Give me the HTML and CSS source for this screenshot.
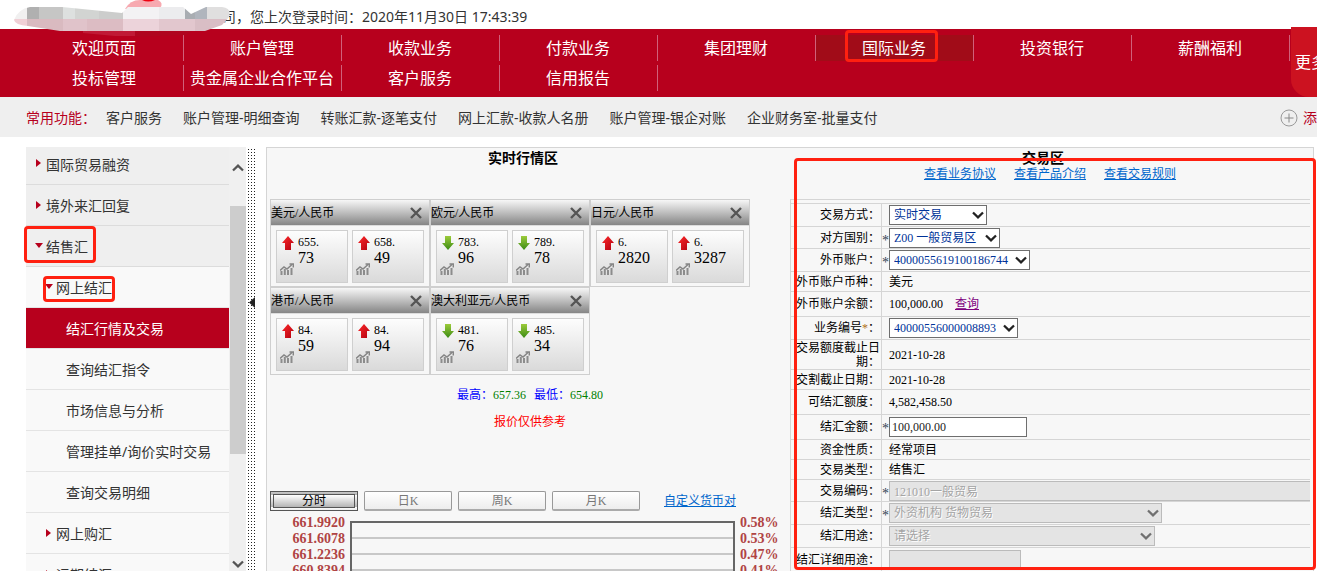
FILE: index.html
```html
<!DOCTYPE html>
<html lang="zh-CN">
<head>
<meta charset="utf-8">
<title>结汇行情及交易</title>
<link rel="stylesheet" href="styles.css">
</head>
<body>
<svg class="defs" width="0" height="0" aria-hidden="true">
  <defs>
    <linearGradient id="gUp" x1="0" y1="0" x2="1" y2="1"><stop offset="0" stop-color="#ff2a2a"/><stop offset="1" stop-color="#b00010"/></linearGradient>
    <linearGradient id="gDown" x1="0" y1="0" x2="0" y2="1"><stop offset="0" stop-color="#9ccb3b"/><stop offset="1" stop-color="#3a8a14"/></linearGradient>
    <symbol id="up" viewBox="0 0 12 14"><path d="M6 0 12 7H9V14H3V7H0Z" fill="url(#gUp)"/></symbol>
    <symbol id="down" viewBox="0 0 12 14"><path d="M3 0H9V7H12L6 14 0 7H3Z" fill="url(#gDown)"/></symbol>
    <symbol id="trend" viewBox="0 0 14 12"><path d="M1.500 12V8M4.800 12V6M8 12V7M11.500 12V5" stroke="#8c8c8c" stroke-width="2" fill="none"/><path d="M0 7.500 4 4 7 6 12 1.500M9.500 1H13.300V4.500" stroke="#858585" stroke-width="1.500" fill="none"/></symbol>
    <symbol id="cross" viewBox="0 0 12 12"><path d="M1 1 11 11M11 1 1 11" stroke="#555" stroke-width="2.400" fill="none"/></symbol>
    <symbol id="chev" viewBox="0 0 12 8"><path d="M1 1.500 6 6.300 11 1.500" stroke="currentColor" stroke-width="2.300" fill="none"/></symbol>
  </defs>
</svg>

<header class="top">
  <svg class="mosaic" width="232" height="38" viewBox="0 0 232 38" aria-hidden="true">
    <defs><clipPath id="blob"><path d="M14 20Q18 9 30 7H62L122 13 128 7H222Q232 8 229 17L222 25 205 31H60L28 26Q15 25 14 20Z"/></clipPath></defs>
    <path d="M125 9Q130 0 140 0H158Q164 3 160 8Z" fill="#f7a9b0"/>
    <path d="M142 0H155Q148 3 142 0Z" fill="#ee0010"/>
    <path d="M83 31H135V36L115 36 83 33Z" fill="#c01a36"/>
    <path d="M135 31H192L186 35 135 37Z" fill="#b0051f"/>
    <g clip-path="url(#blob)">
      <rect x="14" y="7" width="13" height="12" fill="#f1f0f0"/>
      <rect x="27" y="7" width="12" height="12" fill="#b0b0b0"/><rect x="39" y="7" width="24" height="12" fill="#c6c6c5"/>
      <rect x="63" y="7" width="12" height="12" fill="#dde0df"/><rect x="75" y="7" width="24" height="12" fill="#d2d4d2"/>
      <rect x="99" y="7" width="24" height="12" fill="#cccdcc"/><rect x="123" y="7" width="36" height="12" fill="#f3f2f4"/>
      <rect x="159" y="7" width="26" height="12" fill="#ececee"/><rect x="185" y="7" width="10" height="12" fill="#a9adb2"/>
      <rect x="195" y="7" width="12" height="12" fill="#b0b5bd"/><rect x="207" y="7" width="25" height="12" fill="#e0dfdf"/>
      <rect x="14" y="19" width="13" height="12" fill="#f0d0d6"/><rect x="27" y="19" width="36" height="12" fill="#d9bac0"/>
      <rect x="63" y="19" width="24" height="12" fill="#e0c3ca"/><rect x="87" y="19" width="36" height="12" fill="#dcbcc3"/>
      <rect x="123" y="19" width="36" height="12" fill="#ecd3da"/><rect x="159" y="19" width="36" height="12" fill="#e2c7ce"/>
      <rect x="195" y="19" width="37" height="12" fill="#d9bec5"/>
    </g>
    <path d="M183 7H206L191 14Z" fill="#fff"/>
  </svg>
  <p class="login">司，您上次登录时间：2020年11月30日 17:43:39</p>
</header>

<nav class="nav">
  <div class="nav-grid">
    <a href="#">欢迎页面</a><a href="#">账户管理</a><a href="#">收款业务</a><a href="#">付款业务</a><a href="#">集团理财</a><a href="#" class="on">国际业务<i class="mark mark-nav"></i></a><a href="#">投资银行</a><a href="#">薪酬福利</a>
    <a href="#">投标管理</a><a href="#">贵金属企业合作平台</a><a href="#">客户服务</a><a href="#">信用报告</a>
  </div>
  <button class="more" type="button">更多</button>
</nav>

<div class="quick">
  <span class="quick-title">常用功能：</span>
  <a href="#">客户服务</a><a href="#">账户管理-明细查询</a><a href="#">转账汇款-逐笔支付</a><a href="#">网上汇款-收款人名册</a><a href="#">账户管理-银企对账</a><a href="#">企业财务室-批量支付</a>
  <button class="add" type="button"><svg width="18" height="18" viewBox="0 0 18 18"><circle cx="9" cy="9" r="8" fill="none" stroke="#999"/><path d="M9 4.500V13.500M4.500 9H13.500" stroke="#888"/></svg>添加</button>
</div>

<main class="main">
  <aside class="side">
    <ul class="menu">
      <li class="l1 first"><a href="#">国际贸易融资</a></li>
      <li class="l1"><a href="#">境外来汇回复</a></li>
      <li class="l1 open"><a href="#">结售汇</a><i class="mark mark-fx"></i></li>
      <li class="l2 open"><a href="#">网上结汇</a><i class="mark mark-online"></i></li>
      <li class="l3 on"><a href="#">结汇行情及交易</a></li>
      <li class="l3"><a href="#">查询结汇指令</a></li>
      <li class="l3"><a href="#">市场信息与分析</a></li>
      <li class="l3"><a href="#">管理挂单/询价实时交易</a></li>
      <li class="l3"><a href="#">查询交易明细</a></li>
      <li class="l2"><a href="#">网上购汇</a></li>
      <li class="l2"><a href="#">远期结汇</a></li>
    </ul>
    <div class="scroll">
      <svg class="flip" width="12" height="8"><use href="#chev"/></svg>
      <div class="thumb"></div>
      <svg width="12" height="8"><use href="#chev"/></svg>
    </div>
    <div class="split"><svg width="6" height="11" viewBox="0 0 6 11"><path d="M6 0V11L0 5.500Z" fill="#222"/></svg></div>
  </aside>

  <section class="panel">
    <div class="titles"><h2>实时行情区</h2><h2>交易区</h2></div>
    <div class="cols">
      <div class="market">
        <div class="cards">
          <article class="card"><header>美元/人民币<button type="button" aria-label="关闭"><svg width="12" height="12"><use href="#cross"/></svg></button></header>
            <div class="tiles"><div class="tile"><svg class="dir" width="12" height="14"><use href="#up"/></svg><span>655.</span><svg class="trend" width="14" height="12"><use href="#trend"/></svg><b>73</b></div><div class="tile"><svg class="dir" width="12" height="14"><use href="#up"/></svg><span>658.</span><svg class="trend" width="14" height="12"><use href="#trend"/></svg><b>49</b></div></div></article>
          <article class="card"><header>欧元/人民币<button type="button" aria-label="关闭"><svg width="12" height="12"><use href="#cross"/></svg></button></header>
            <div class="tiles"><div class="tile"><svg class="dir" width="12" height="14"><use href="#down"/></svg><span>783.</span><svg class="trend" width="14" height="12"><use href="#trend"/></svg><b>96</b></div><div class="tile"><svg class="dir" width="12" height="14"><use href="#down"/></svg><span>789.</span><svg class="trend" width="14" height="12"><use href="#trend"/></svg><b>78</b></div></div></article>
          <article class="card"><header>日元/人民币<button type="button" aria-label="关闭"><svg width="12" height="12"><use href="#cross"/></svg></button></header>
            <div class="tiles"><div class="tile"><svg class="dir" width="12" height="14"><use href="#up"/></svg><span>6.</span><svg class="trend" width="14" height="12"><use href="#trend"/></svg><b>2820</b></div><div class="tile"><svg class="dir" width="12" height="14"><use href="#up"/></svg><span>6.</span><svg class="trend" width="14" height="12"><use href="#trend"/></svg><b>3287</b></div></div></article>
          <article class="card"><header>港币/人民币<button type="button" aria-label="关闭"><svg width="12" height="12"><use href="#cross"/></svg></button></header>
            <div class="tiles"><div class="tile"><svg class="dir" width="12" height="14"><use href="#up"/></svg><span>84.</span><svg class="trend" width="14" height="12"><use href="#trend"/></svg><b>59</b></div><div class="tile"><svg class="dir" width="12" height="14"><use href="#up"/></svg><span>84.</span><svg class="trend" width="14" height="12"><use href="#trend"/></svg><b>94</b></div></div></article>
          <article class="card"><header>澳大利亚元/人民币<button type="button" aria-label="关闭"><svg width="12" height="12"><use href="#cross"/></svg></button></header>
            <div class="tiles"><div class="tile"><svg class="dir" width="12" height="14"><use href="#down"/></svg><span>481.</span><svg class="trend" width="14" height="12"><use href="#trend"/></svg><b>76</b></div><div class="tile"><svg class="dir" width="12" height="14"><use href="#down"/></svg><span>485.</span><svg class="trend" width="14" height="12"><use href="#trend"/></svg><b>34</b></div></div></article>
        </div>
        <p class="range"><span>最高：<em>657.36</em></span><span>最低：<em>654.80</em></span></p>
        <p class="notice">报价仅供参考</p>
        <div class="tabs">
          <button type="button" class="tab on">分时</button><button type="button" class="tab">日K</button><button type="button" class="tab">周K</button><button type="button" class="tab">月K</button>
          <a href="#">自定义货币对</a>
        </div>
        <div class="chart">
          <div class="axis left"><span>661.9920</span><span>661.6078</span><span>661.2236</span><span>660.8394</span></div>
          <div class="plot"></div>
          <div class="axis"><span>0.58%</span><span>0.53%</span><span>0.47%</span><span>0.41%</span></div>
        </div>
      </div>

      <div class="trade">
        <div class="links"><a href="#">查看业务协议</a><a href="#">查看产品介绍</a><a href="#">查看交易规则</a></div>
        <form class="form">
          <div class="row h23"><label for="f1">交易方式：</label><div class="val"><span class="sel w98"><select id="f1"><option>实时交易</option></select><svg width="12" height="8"><use href="#chev"/></svg></span></div></div>
          <div class="row h22"><label for="f2">对方国别：</label><div class="val"><i class="req">*</i><span class="sel w111"><select id="f2"><option>Z00 一般贸易区</option></select><svg width="12" height="8"><use href="#chev"/></svg></span></div></div>
          <div class="row h23"><label for="f3">外币账户：</label><div class="val"><i class="req">*</i><span class="sel w141"><select id="f3"><option>4000055619100186744</option></select><svg width="12" height="8"><use href="#chev"/></svg></span></div></div>
          <div class="row h20"><span class="lab">外币账户币种：</span><div class="val">美元</div></div>
          <div class="row h25"><span class="lab">外币账户余额：</span><div class="val">100,000.00<a class="query" href="#">查询</a></div></div>
          <div class="row h23"><label for="f4">业务编号<i class="star">*</i>：</label><div class="val"><span class="sel w129"><select id="f4"><option>40000556000008893</option></select><svg width="12" height="8"><use href="#chev"/></svg></span></div></div>
          <div class="row h30"><span class="lab">交易额度截止日期：</span><div class="val">2021-10-28</div></div>
          <div class="row h20"><span class="lab">交割截止日期：</span><div class="val">2021-10-28</div></div>
          <div class="row h25"><span class="lab">可结汇额度：</span><div class="val">4,582,458.50</div></div>
          <div class="row h25"><label for="f5">结汇金额：</label><div class="val"><i class="req">*</i><input id="f5" class="txt w138" type="text" value="100,000.00"></div></div>
          <div class="row h20"><span class="lab">资金性质：</span><div class="val">经常项目</div></div>
          <div class="row h20"><span class="lab">交易类型：</span><div class="val">结售汇</div></div>
          <div class="row h22"><label for="f6">交易编码：</label><div class="val"><i class="req">*</i><input id="f6" class="txt wide" type="text" value="121010一般贸易" disabled></div></div>
          <div class="row h23"><label for="f7">结汇类型：</label><div class="val"><i class="req">*</i><span class="sel w273"><select id="f7" disabled><option>外资机构 货物贸易</option></select><svg width="12" height="8"><use href="#chev"/></svg></span></div></div>
          <div class="row h23"><label for="f8">结汇用途：</label><div class="val"><span class="sel w266"><select id="f8" disabled><option>请选择</option></select><svg width="12" height="8"><use href="#chev"/></svg></span></div></div>
          <div class="row h25"><label for="f9">结汇详细用途：</label><div class="val"><input id="f9" class="txt w132" type="text" disabled></div></div>
        </form>
        <i class="mark mark-trade"></i>
      </div>
    </div>
  </section>
</main>
</body>
</html>
```
FILE: styles.css
```css
* { box-sizing: border-box; }

body {
  margin: 0;
  height: 100vh;
  overflow: hidden;
  display: flex;
  flex-direction: column;
  background: #fff;
  color: #333;
  font: 14px/20px "Noto Sans", "Noto Sans CJK SC", sans-serif;
}

p, h2, ul { margin: 0; padding: 0; }
ul { list-style: none; }
a { color: inherit; text-decoration: none; }
button { padding: 0; border: 0; background: none; font: inherit; color: inherit; }
svg { display: block; flex: none; }
.defs { position: absolute; }

.mark {
  position: absolute;
  border: 3px solid #ff2010;
  border-radius: 4px;
  pointer-events: none;
}

/* top line */
.top { position: relative; flex: none; height: 29px; padding: 7px 0 0 222px; }
.mosaic { position: absolute; left: 0; top: 0; z-index: 2; }
.login { white-space: nowrap; }

/* main navigation */
.nav { flex: none; display: flex; height: 68px; padding-left: 26px; background: #b7001d; color: #fff; font-size: 16px; }
.nav-grid { flex: none; display: grid; grid-template-columns: repeat(8, 158px); grid-auto-rows: 26px; row-gap: 4px; padding-top: 6px; }
.nav-grid a { position: relative; padding-right: 1px; border-right: 1px solid #d0607a; text-align: center; line-height: 26px; white-space: nowrap; }
.nav-grid .on { background: #a10c18; }
.mark-nav { left: 29px; top: -5px; width: 93px; height: 32px; }
.more { flex: none; width: 90px; height: 70px; margin: -2px 0 0 1px; padding-left: 4px; background: #cc1220; border-radius: 0 0 0 18px; color: #fff; text-align: left; }

/* shortcuts */
.quick { flex: none; display: flex; align-items: center; gap: 21px; height: 40px; padding: 2px 0 0 26px; background: #efefef; white-space: nowrap; }
.quick-title { margin-right: -11px; color: #b7001d; }
.add { display: flex; align-items: center; gap: 5px; margin: 0 -14px 0 auto; color: #b7001d; }

.main { flex: 1; min-height: 0; display: flex; padding: 10px 3px 0 26px; }

/* side menu */
.side { flex: none; display: flex; width: 230px; margin-right: 10px; }
.menu { width: 203px; }
.menu li { position: relative; height: 41px; border-bottom: 1px solid #e4e4e4; background: #f9f9f9; line-height: 41px; }
.menu .l1 { background: #efefef; border-color: #dcdcdc; padding-left: 20px; }
.menu .first { height: 38px; line-height: 36px; }
.menu .l2 { padding-left: 30px; }
.menu .l3 { padding-left: 40px; }
.menu .on { background: #b7001d; color: #fff; }
.l1::before, .l2::before { content: ""; position: absolute; left: 10px; top: 16px; border: 4px solid transparent; border-left: 5px solid #b7001d; border-right: 0; }
.l2::before { left: 20px; }
.menu .first::before { top: 12px; }
.menu .open::before { left: 9px; top: 17px; border: 4px solid transparent; border-top: 5px solid #b7001d; border-bottom: 0; }
.menu .l2.open::before { left: 19px; }
.mark-fx { left: -2px; top: 0; width: 72px; height: 37px; }
.mark-online { left: 17px; top: 9px; width: 72px; height: 26px; }

.scroll { width: 17px; display: flex; flex-direction: column; align-items: center; padding: 17px 0 3px 1px; background: #f0f0f0; color: #555; }
.thumb { width: 100%; height: 248px; margin: 34px 0 auto; background: #cdcdcd; }
.flip { transform: rotate(180deg); }
.split { flex: 1; padding: 150px 0 0 3px; background-image: linear-gradient(#fff 2px, transparent 2px), linear-gradient(90deg, #fff 2px, #222 2px); background-size: 3px 3px; }

/* work area */
.panel { flex: 1; min-width: 0; display: flex; flex-direction: column; border: 1px solid #d5d5d5; border-bottom: 0; background: #f7f7f7; color: #000; font: 12px/14px "Liberation Serif", "Noto Sans CJK SC", serif; }
.titles { display: grid; grid-template-columns: 1fr 1fr; padding: 3px 6px 0 0; }
.titles h2 { padding-right: 8px; text-align: center; font-size: 14px; line-height: 16px; }
.cols { flex: 1; min-height: 0; display: grid; grid-template-columns: 1fr 1fr; grid-template-rows: minmax(0, 1fr); padding: 0 3px; }

.market { padding-top: 32px; overflow: hidden; }
.cards { display: grid; grid-template-columns: repeat(3, 160px); }
.card { height: 88px; border: 1px solid #cfcfcf; }
.card header { display: flex; align-items: center; justify-content: space-between; height: 25px; padding-right: 7px; background: linear-gradient(#f7f7f7, #c4c4c4 45%, #858585); white-space: nowrap; }
.tiles { display: grid; grid-template-columns: 72px 72px; gap: 4px; padding: 4px 5px; border-top: 1px solid #dcdcdc; }
.tile { display: grid; grid-template-columns: 18px 1fr; grid-template-rows: 16px 16px; height: 53px; padding: 3px 0 0 3px; border: 1px solid #cfcfcf; background: linear-gradient(#fdfdfd, #dadada); line-height: 16px; }
.tile .dir { margin: 2px 0 0 2px; }
.tile .trend { margin-top: 13px; }
.tile b { font-weight: normal; font-size: 16px; }

.range { display: flex; justify-content: center; gap: 8px; margin-top: 13px; color: #00f; }
.range em { font-style: normal; color: #008000; }
.notice { margin-top: 13px; text-align: center; color: #f00; }

.tabs { display: flex; align-items: center; gap: 6px; margin-top: 62px; }
.tab { width: 88px; height: 20px; border: 1px solid #999; border-bottom: 2px solid #aaa; border-radius: 2px; background: linear-gradient(#fff, #ededed); color: #777; }
.tab.on { border: 4px double #555; border-radius: 0; background: linear-gradient(#fff, #b4b4b4); color: #000; line-height: 12px; }
.tabs a { margin-left: 18px; }
.tabs a, .links a { color: #06c; text-decoration: underline; }

.chart { display: flex; margin-top: 4px; color: #b04444; font-weight: bold; font-size: 14px; line-height: 16px; }
.axis { width: 55px; padding-left: 5px; }
.axis.left { width: 80px; padding: 0 5px 0 0; text-align: right; }
.axis span { display: block; }
.plot { flex: 1; height: 80px; margin-top: 6px; border: 2px solid #666; background: repeating-linear-gradient(transparent 0 14px, #c8c8c8 14px 16px); }

.trade { position: relative; min-height: 0; display: flex; flex-direction: column; }
.links { flex: none; display: flex; justify-content: center; gap: 18px; height: 32px; }
.form { flex: 1; min-height: 0; overflow: hidden; padding-top: 3px; border: solid #d5d5d5; border-width: 1px 0 0 1px; }
.row { display: flex; border-top: 1px solid #d5d5d5; }
.h20 { height: 20px; }
.h22 { height: 22px; }
.h23 { height: 23px; }
.h25 { height: 25px; }
.h30 { height: 30px; }
.row > label, .lab { flex: none; display: flow-root; width: 91px; padding-right: 1px; border-right: 1px solid #d5d5d5; text-align: right; align-content: center; }
.val { position: relative; flex: 1; min-width: 0; display: flex; align-items: center; padding-left: 7px; overflow: hidden; }
.req { position: absolute; left: 0; top: 7px; font-style: normal; font-size: 14px; color: #345; }
.star { font-style: normal; color: #b07020; }
.query { margin-left: 12px; color: #800080; text-decoration: underline; }

.sel { position: relative; display: block; height: 20px; }
.sel select, .txt { width: 100%; height: 20px; margin: 0; padding: 0 4px; border: 1px solid #6e6e6e; border-radius: 0; background: #fff; color: #039; font: inherit; appearance: none; }
.sel svg { position: absolute; right: 3px; top: 6px; color: #222; pointer-events: none; }
.txt { flex: none; padding: 0 2px; color: #222; }
.sel select:disabled, .txt:disabled { border-color: #bbb; background: #e4e4e4; color: #a4a4a4; opacity: 1; text-shadow: 1px 1px #fff; padding-left: 4px; }
.sel select:disabled + svg { color: #707070; }
.w98 { width: 98px; }
.w111 { width: 111px; }
.w129 { width: 129px; }
.txt.w132 { width: 132px; }
.txt.w138 { width: 138px; }
.w141 { width: 141px; }
.w266 { width: 266px; }
.w273 { width: 273px; }
.txt.wide { width: 100%; border-right: 0; }
.mark-trade { left: 4px; top: -9px; right: -6px; bottom: 1px; }
```
